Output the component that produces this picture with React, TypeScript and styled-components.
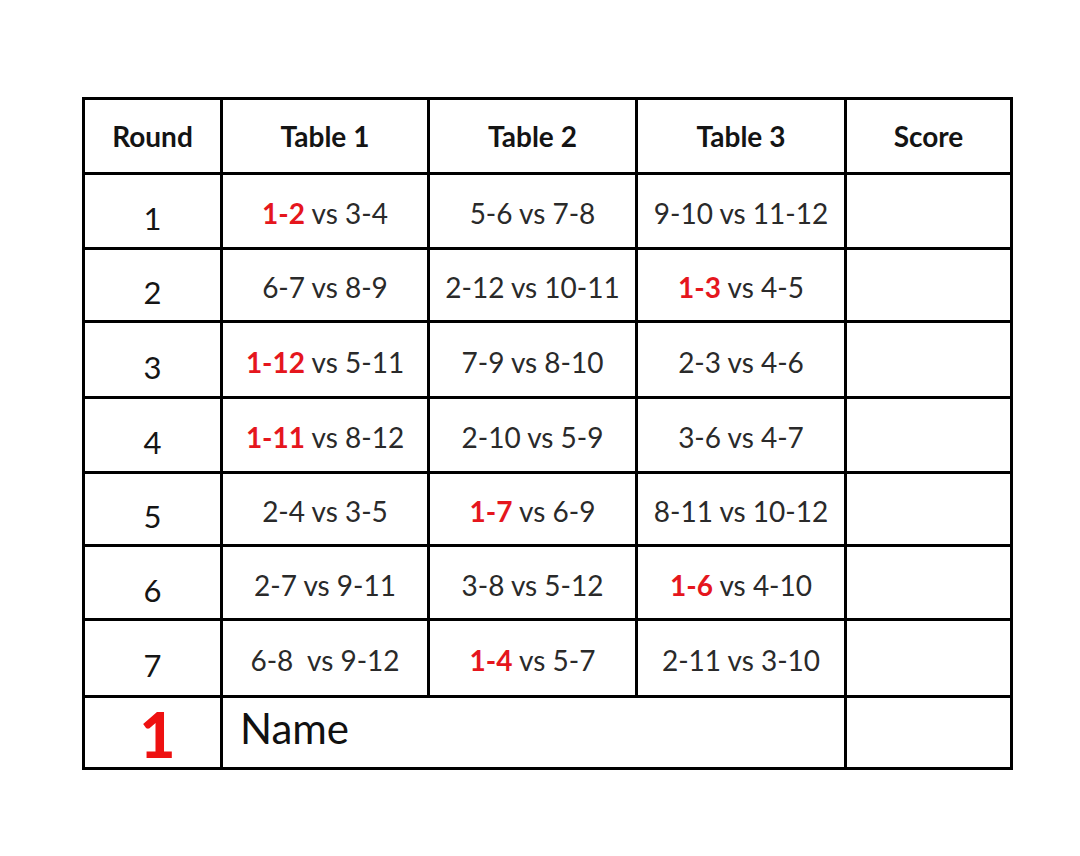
import React from "react";
import styled, { createGlobalStyle } from "styled-components";

const GlobalStyle = createGlobalStyle`
  html, body {
    margin: 0;
    padding: 0;
    background: #ffffff;
  }
  body {
    font-family: Lato, "Open Sans", "Liberation Sans", sans-serif;
    color: #1c1c1c;
  }
`;

const Page = styled.div`
  width: 1080px;
  height: 856px;
  padding: 97px 0 0 82px;
  box-sizing: border-box;
  background: #fff;
`;

const Grid = styled.table`
  border-collapse: collapse;
  table-layout: fixed;
  width: 928px;
  border: 3px solid #000;
`;

const HeadCell = styled.th`
  border: 3px solid #000;
  height: 72px;
  padding: 0;
  font-size: 28px;
  font-weight: 700;
  color: #141414;
  text-align: center;
  vertical-align: middle;
`;

// $h is the row pitch (line to line); the cell subtracts the shared border
const Cell = styled.td<{ $h: number }>`
  border: 3px solid #000;
  height: ${(p) => p.$h - 7}px;
  padding: 4px 0 0;
  font-size: 28px;
  color: #2a2a2a;
  text-align: center;
  vertical-align: middle;
  white-space: pre;
`;

const RoundCell = styled(Cell)`
  height: ${(p) => p.$h - 17}px;
  padding-top: 14px;
  font-size: 31px;
  color: #151515;
`;

const Hot = styled.span`
  color: #e5161d;
  font-weight: 700;
`;

const BigOne = styled(Cell)`
  height: ${(p) => p.$h - 7}px;
  padding: 4px 0 0 10px;
  font-size: 62px;
  font-weight: 900;
  color: #ee1111;
  line-height: 0.9;
`;

const NameCell = styled(Cell)`
  height: ${(p) => p.$h - 13}px;
  padding: 0 0 10px 17px;
  text-align: left;
  font-size: 42px;
  color: #111;
`;

type Match = { hot?: string; rest: string };

const m = (s: string): Match => {
  if (s.startsWith("*")) {
    const [hot, ...rest] = s.slice(1).split(" ");
    return { hot, rest: " " + rest.join(" ") };
  }
  return { rest: s };
};

const rows: { h: number; cells: Match[] }[] = [
  { h: 75, cells: [m("*1-2 vs 3-4"), m("5-6 vs 7-8"), m("9-10 vs 11-12")] },
  { h: 73, cells: [m("6-7 vs 8-9"), m("2-12 vs 10-11"), m("*1-3 vs 4-5")] },
  { h: 76, cells: [m("*1-12 vs 5-11"), m("7-9 vs 8-10"), m("2-3 vs 4-6")] },
  { h: 75, cells: [m("*1-11 vs 8-12"), m("2-10 vs 5-9"), m("3-6 vs 4-7")] },
  { h: 73, cells: [m("2-4 vs 3-5"), m("*1-7 vs 6-9"), m("8-11 vs 10-12")] },
  { h: 74, cells: [m("2-7 vs 9-11"), m("3-8 vs 5-12"), m("*1-6 vs 4-10")] },
  { h: 77, cells: [m("6-8  vs 9-12"), m("*1-4 vs 5-7"), m("2-11 vs 3-10")] },
];

export default function App() {
  return (
    <Page>
      <GlobalStyle />
      <Grid>
        <colgroup>
          <col style={{ width: 138 }} />
          <col style={{ width: 207 }} />
          <col style={{ width: 208 }} />
          <col style={{ width: 209 }} />
          <col style={{ width: 166 }} />
        </colgroup>
        <thead>
          <tr>
            <HeadCell>Round</HeadCell>
            <HeadCell>Table 1</HeadCell>
            <HeadCell>Table 2</HeadCell>
            <HeadCell>Table 3</HeadCell>
            <HeadCell>Score</HeadCell>
          </tr>
        </thead>
        <tbody>
          {rows.map((r, i) => (
            <tr key={i}>
              <RoundCell $h={r.h}>{i + 1}</RoundCell>
              {r.cells.map((c, j) => (
                <Cell key={j} $h={r.h}>
                  {c.hot && <Hot>{c.hot}</Hot>}
                  {c.rest}
                </Cell>
              ))}
              <Cell $h={r.h} />
            </tr>
          ))}
          <tr>
            <BigOne $h={72}>1</BigOne>
            <NameCell $h={72} colSpan={3}>
              Name
            </NameCell>
            <Cell $h={72} />
          </tr>
        </tbody>
      </Grid>
    </Page>
  );
}
